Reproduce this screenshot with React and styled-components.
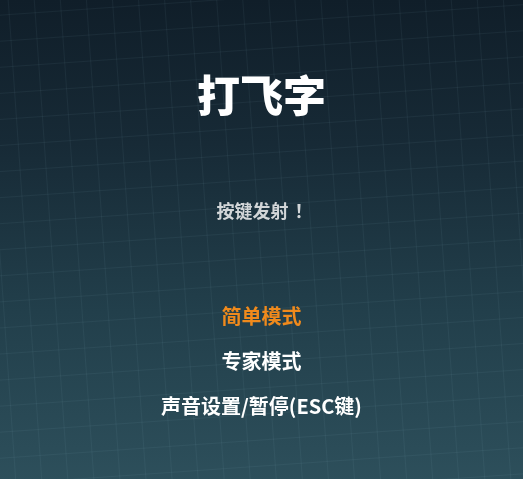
import React from "react";
import styled, { createGlobalStyle } from "styled-components";

const Global = createGlobalStyle`
  html, body { margin: 0; padding: 0; height: 100%; }
  body { background: #13222e; overflow: hidden; }
  #root { height: 100%; }
`;

const Screen = styled.main`
  position: relative;
  height: 100vh;
  overflow: hidden;
  display: flex;
  flex-direction: column;
  align-items: center;
  font-family: "Noto Sans CJK SC", "Noto Sans", sans-serif;
  background: linear-gradient(180deg, #101e29 0%, #172a36 30%, #223f4b 65%, #2d4f5b 100%);

  &::before {
    content: "";
    position: absolute;
    inset: -30%;
    background-image:
      repeating-linear-gradient(90deg, rgba(150, 195, 210, 0.065) 0 1.5px, transparent 1.5px 26px),
      repeating-linear-gradient(0deg, rgba(150, 195, 210, 0.065) 0 1.5px, transparent 1.5px 26px);
    transform: rotate(-4deg);
    filter: blur(0.4px);
    pointer-events: none;
  }
`;

const Title = styled.h1`
  position: relative;
  margin: 64px 0 0;
  font-size: 43px;
  font-weight: 900;
  line-height: 58px;
  color: #ffffff;
  filter: blur(0.3px);
`;

const Subtitle = styled.p`
  position: relative;
  margin: 75px 0 0 8px;
  font-size: 18px;
  font-weight: 700;
  line-height: 26px;
  color: #d2d6d8;
  filter: blur(0.3px);
`;

const Bang = styled.span`
  display: inline-block;
  width: 22px;
  text-align: center;
  margin-left: 4px;
`;

const Menu = styled.ul`
  position: relative;
  list-style: none;
  margin: 79px 0 0;
  padding: 0;
  display: flex;
  flex-direction: column;
  align-items: center;
  gap: 17px;
`;

const Item = styled.li`
  font-size: 20px;
  font-weight: 700;
  line-height: 28px;
  color: ${(p) => (p.$active ? "#f08a1c" : "#ffffff")};
  filter: blur(0.3px);
`;

export default function App() {
  return (
    <>
      <Global />
      <Screen>
        <Title>打飞字</Title>
        <Subtitle>
          按键发射<Bang>！</Bang>
        </Subtitle>
        <Menu>
          <Item $active>简单模式</Item>
          <Item>专家模式</Item>
          <Item>声音设置/暂停(ESC键)</Item>
        </Menu>
      </Screen>
    </>
  );
}
